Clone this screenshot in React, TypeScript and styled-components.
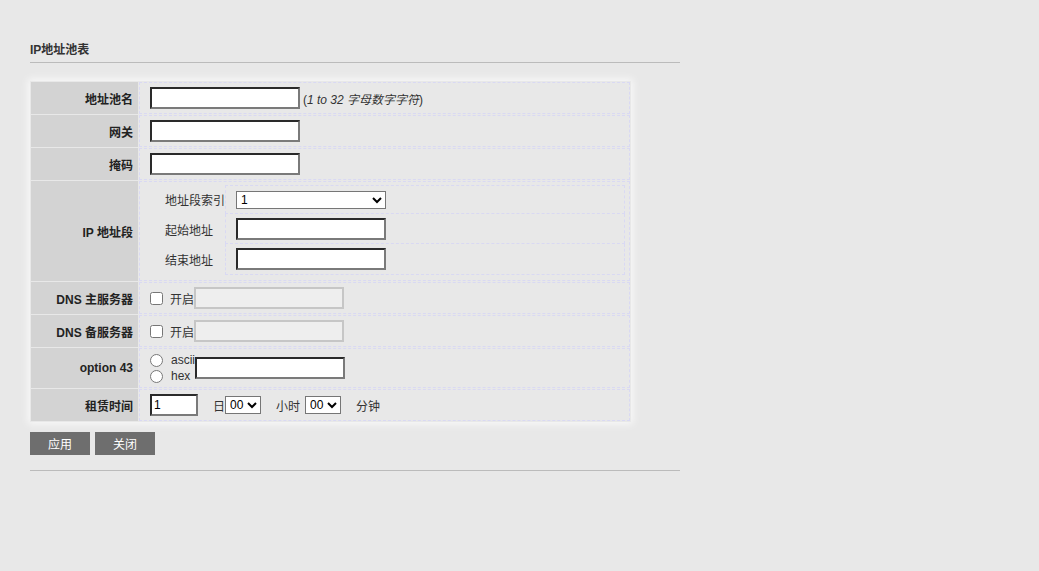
import React from 'react';
import styled, { createGlobalStyle } from 'styled-components';

const GlobalStyle = createGlobalStyle`
  html, body {
    margin: 0;
    padding: 0;
    background: #e8e8e8;
  }
  body {
    font-family: "Liberation Sans", "Noto Sans CJK SC", sans-serif;
    font-size: 12px;
    color: #333;
  }
`;

const Page = styled.div`
  width: 650px;
  padding: 0 30px;
`;

const Title = styled.div`
  padding: 43px 0 5px;
  line-height: 14px;
  font-weight: bold;
  color: #333;
  border-bottom: 1px solid #bbb;
`;

const FormGrid = styled.div`
  margin-top: 18px;
  width: 599px;
  padding: 1px;
  display: grid;
  grid-template-columns: 107px 491px;
  grid-template-rows: 32px 32px 32px 100px 32px 32px 40px 32px;
  gap: 1px;
  box-shadow: 0 0 8px 2px rgba(255, 255, 255, 0.75);
`;

const LabelCell = styled.div`
  background: #d3d3d3;
  display: flex;
  align-items: center;
  justify-content: flex-end;
  padding-right: 5px;
  font-weight: bold;
  color: #222;
`;

const ValueCell = styled.div<{ $top?: boolean }>`
  border: 1px dashed #d9d9f3;
  display: flex;
  align-items: ${p => (p.$top ? 'flex-start' : 'center')};
  padding: ${p => (p.$top ? '3px 3px 0 15px' : '0 0 0 10px')};
  background: #e8e8e8;
`;

const TextInput = styled.input<{ $w?: number }>`
  box-sizing: border-box;
  width: ${p => p.$w || 150}px;
  height: 22px;
  margin: 0;
  padding: 1px 2px;
  border-style: solid;
  border-width: 2px;
  border-color: #2a2a2a #7a7a7a #7a7a7a #2a2a2a;
  background: #fff;
  font: 12px "Liberation Sans", "Noto Sans CJK SC", sans-serif;
  color: #000;
  outline: none;
`;

const DisabledInput = styled.input`
  box-sizing: border-box;
  width: 150px;
  height: 22px;
  margin: 0;
  border: 2px solid #c6c6c6;
  background: #eeeeee;
`;

const Hint = styled.span`
  margin-left: 3px;
  color: #333;
  i {
    font-style: italic;
  }
`;

const InnerGrid = styled.div`
  width: 470px;
  display: grid;
  grid-template-columns: 70px 400px;
  grid-template-rows: 29px 30px 31px;
`;

const InnerLabel = styled.div`
  display: flex;
  align-items: center;
  padding-left: 10px;
  color: #333;
`;

const InnerValue = styled.div<{ $first?: boolean }>`
  border: 1px dashed #d9d9f3;
  border-top: ${p => (p.$first ? '1px dashed #d9d9f3' : 'none')};
  display: flex;
  align-items: center;
  padding-left: 10px;
`;

const Select = styled.select<{ $w?: number }>`
  box-sizing: border-box;
  width: ${p => (p.$w ? `${p.$w}px` : 'auto')};
  height: 18px;
  margin: 0;
  padding: 0;
  border: 1px solid #767676;
  border-radius: 0;
  background: #fff;
  font: 12px "Liberation Sans", "Noto Sans CJK SC", sans-serif;
  color: #000;
`;

const Check = styled.input`
  width: 13px;
  height: 13px;
  margin: 0 7px 0 0;
`;

const SmallText = styled.span<{ $ml?: number; $mr?: number }>`
  margin-left: ${p => p.$ml || 0}px;
  margin-right: ${p => p.$mr || 0}px;
  color: #333;
  white-space: nowrap;
`;

const RadioGroup = styled.div`
  width: 45px;
  display: flex;
  flex-direction: column;
  gap: 3px;
`;

const RadioRow = styled.label`
  display: flex;
  align-items: center;
  height: 13px;
  line-height: 13px;
  white-space: nowrap;
  input {
    width: 13px;
    height: 13px;
    margin: 0 8px 0 0;
  }
`;

const ButtonBar = styled.div`
  margin-top: 10px;
  display: flex;
  gap: 5px;
`;

const Button = styled.button`
  width: 60px;
  height: 23px;
  border: none;
  background: #6e6e6e;
  color: #fff;
  font: 12px "Liberation Sans", "Noto Sans CJK SC", sans-serif;
  padding: 0;
`;

const BottomLine = styled.div`
  margin-top: 15px;
  border-top: 1px solid #bbb;
`;

const App: React.FC = () => {
  return (
    <Page>
      <GlobalStyle />
      <Title>IP地址池表</Title>
      <FormGrid>
        <LabelCell>地址池名</LabelCell>
        <ValueCell>
          <TextInput />
          <Hint>
            (<i>1 to 32 字母数字字符</i>)
          </Hint>
        </ValueCell>

        <LabelCell>网关</LabelCell>
        <ValueCell>
          <TextInput />
        </ValueCell>

        <LabelCell>掩码</LabelCell>
        <ValueCell>
          <TextInput />
        </ValueCell>

        <LabelCell>IP 地址段</LabelCell>
        <ValueCell $top>
          <InnerGrid>
            <InnerLabel>地址段索引</InnerLabel>
            <InnerValue $first>
              <Select $w={150} defaultValue="1">
                <option value="1">1</option>
                <option value="2">2</option>
              </Select>
            </InnerValue>
            <InnerLabel>起始地址</InnerLabel>
            <InnerValue>
              <TextInput />
            </InnerValue>
            <InnerLabel>结束地址</InnerLabel>
            <InnerValue>
              <TextInput />
            </InnerValue>
          </InnerGrid>
        </ValueCell>

        <LabelCell>DNS 主服务器</LabelCell>
        <ValueCell>
          <Check type="checkbox" />
          <SmallText>开启</SmallText>
          <DisabledInput disabled />
        </ValueCell>

        <LabelCell>DNS 备服务器</LabelCell>
        <ValueCell>
          <Check type="checkbox" />
          <SmallText>开启</SmallText>
          <DisabledInput disabled />
        </ValueCell>

        <LabelCell>option 43</LabelCell>
        <ValueCell>
          <RadioGroup>
            <RadioRow>
              <input type="radio" name="opt43" />
              ascii
            </RadioRow>
            <RadioRow>
              <input type="radio" name="opt43" />
              hex
            </RadioRow>
          </RadioGroup>
          <TextInput />
        </ValueCell>

        <LabelCell>租赁时间</LabelCell>
        <ValueCell>
          <TextInput $w={48} defaultValue="1" />
          <SmallText $ml={15}>日</SmallText>
          <Select defaultValue="00">
            <option value="00">00</option>
          </Select>
          <SmallText $ml={15} $mr={5}>小时</SmallText>
          <Select defaultValue="00">
            <option value="00">00</option>
          </Select>
          <SmallText $ml={15}>分钟</SmallText>
        </ValueCell>
      </FormGrid>
      <ButtonBar>
        <Button>应用</Button>
        <Button>关闭</Button>
      </ButtonBar>
      <BottomLine />
    </Page>
  );
};

export default App;
